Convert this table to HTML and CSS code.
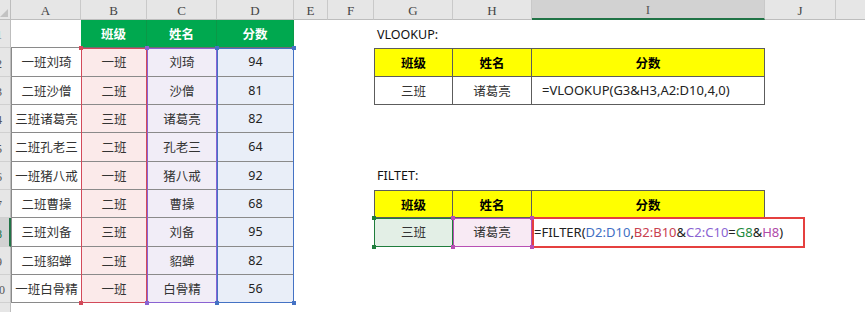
FILE: index.html
```html
<!DOCTYPE html>
<html lang="zh-CN">
<head>
<meta charset="utf-8">
<title>Sheet</title>
<link rel="stylesheet" href="styles.css">
</head>
<body>
<div class="sheet">
  <div class="layer cells">
    <!-- header row -->
    <div class="c corner"><i class="tri"></i></div>
    <div class="c ch">A</div>
    <div class="c ch">B</div>
    <div class="c ch">C</div>
    <div class="c ch">D</div>
    <div class="c ch">E</div>
    <div class="c ch">F</div>
    <div class="c ch">G</div>
    <div class="c ch">H</div>
    <div class="c ch sel">I</div>
    <div class="c ch">J</div>
    <div class="c ch last"></div>

    <!-- row 1 -->
    <div class="c rh"><span>1</span></div>
    <div class="c a a1"></div>
    <div class="c gh">班级</div>
    <div class="c gh">姓名</div>
    <div class="c gh">分数</div>
    <div class="c"></div>
    <div class="c"></div>
    <div class="c label vl">VLOOKUP:</div>
    <div class="c"></div>
    <div class="c"></div>
    <div class="c"></div>
    <div class="c"></div>

    <!-- row 2 -->
    <div class="c rh"><span>2</span></div>
    <div class="c a">一班刘琦</div>
    <div class="c d fb">一班</div>
    <div class="c d fc">刘琦</div>
    <div class="c d fd">94</div>
    <div class="c"></div>
    <div class="c"></div>
    <div class="c t yh tl tt">班级</div>
    <div class="c t yh tt">姓名</div>
    <div class="c t yh tt">分数</div>
    <div class="c"></div>
    <div class="c"></div>

    <!-- row 3 -->
    <div class="c rh"><span>3</span></div>
    <div class="c a">二班沙僧</div>
    <div class="c d fb">二班</div>
    <div class="c d fc">沙僧</div>
    <div class="c d fd">81</div>
    <div class="c"></div>
    <div class="c"></div>
    <div class="c t tl">三班</div>
    <div class="c t">诸葛亮</div>
    <div class="c t formula vf">=VLOOKUP(G3&amp;H3,A2:D10,4,0)</div>
    <div class="c"></div>
    <div class="c"></div>

    <!-- row 4 -->
    <div class="c rh"><span>4</span></div>
    <div class="c a">三班诸葛亮</div>
    <div class="c d fb">三班</div>
    <div class="c d fc">诸葛亮</div>
    <div class="c d fd">82</div>
    <div class="c"></div><div class="c"></div><div class="c"></div><div class="c"></div><div class="c"></div><div class="c"></div><div class="c"></div>

    <!-- row 5 -->
    <div class="c rh"><span>5</span></div>
    <div class="c a">二班孔老三</div>
    <div class="c d fb">二班</div>
    <div class="c d fc">孔老三</div>
    <div class="c d fd">64</div>
    <div class="c"></div><div class="c"></div><div class="c"></div><div class="c"></div><div class="c"></div><div class="c"></div><div class="c"></div>

    <!-- row 6 -->
    <div class="c rh"><span>6</span></div>
    <div class="c a">一班猪八戒</div>
    <div class="c d fb">一班</div>
    <div class="c d fc">猪八戒</div>
    <div class="c d fd">92</div>
    <div class="c"></div>
    <div class="c"></div>
    <div class="c label">FILTET:</div>
    <div class="c"></div><div class="c"></div><div class="c"></div><div class="c"></div>

    <!-- row 7 -->
    <div class="c rh"><span>7</span></div>
    <div class="c a">二班曹操</div>
    <div class="c d fb">二班</div>
    <div class="c d fc">曹操</div>
    <div class="c d fd">68</div>
    <div class="c"></div>
    <div class="c"></div>
    <div class="c t yh tl tt">班级</div>
    <div class="c t yh tt">姓名</div>
    <div class="c t yh tt">分数</div>
    <div class="c"></div>
    <div class="c"></div>

    <!-- row 8 -->
    <div class="c rh rsel"><span>8</span></div>
    <div class="c a">三班刘备</div>
    <div class="c d fb">三班</div>
    <div class="c d fc">刘备</div>
    <div class="c d fd">95</div>
    <div class="c"></div>
    <div class="c"></div>
    <div class="c t tl fg">三班</div>
    <div class="c t fh">诸葛亮</div>
    <div class="c t formula ff">=FILTER(<span class="k-d">D2:D10</span>,<span class="k-b">B2:B10</span>&amp;<span class="k-c">C2:C10</span>=<span class="k-g">G8</span>&amp;<span class="k-h">H8</span>)</div>
    <div class="c"></div>
    <div class="c"></div>

    <!-- row 9 -->
    <div class="c rh"><span>9</span></div>
    <div class="c a">二班貂蝉</div>
    <div class="c d fb">二班</div>
    <div class="c d fc">貂蝉</div>
    <div class="c d fd">82</div>
    <div class="c"></div><div class="c"></div><div class="c"></div><div class="c"></div><div class="c"></div><div class="c"></div><div class="c"></div>

    <!-- row 10 -->
    <div class="c rh"><span>10</span></div>
    <div class="c a">一班白骨精</div>
    <div class="c d fb">一班</div>
    <div class="c d fc">白骨精</div>
    <div class="c d fd">56</div>
    <div class="c"></div><div class="c"></div><div class="c"></div><div class="c"></div><div class="c"></div><div class="c"></div><div class="c"></div>

    <!-- row 11 -->
    <div class="c rh"><span>11</span></div>
    <div class="c"></div><div class="c"></div><div class="c"></div><div class="c"></div><div class="c"></div><div class="c"></div><div class="c"></div><div class="c"></div><div class="c"></div><div class="c"></div><div class="c"></div>
  </div>

  <div class="layer marks">
    <div class="range r-b"><i class="hd tl"></i><i class="hd tr"></i><i class="hd bl"></i><i class="hd br"></i></div>
    <div class="range r-c"><i class="hd tl"></i><i class="hd tr"></i><i class="hd bl"></i><i class="hd br"></i></div>
    <div class="range r-d"><i class="hd tl"></i><i class="hd tr"></i><i class="hd bl"></i><i class="hd br"></i></div>
    <div class="range r-g"><i class="hd tl"></i><i class="hd tr"></i><i class="hd bl"></i><i class="hd br"></i></div>
    <div class="range r-h"><i class="hd tl"></i><i class="hd tr"></i><i class="hd bl"></i><i class="hd br"></i></div>
    <div class="editbox"></div>
  </div>
</div>
</body>
</html>
```

FILE: styles.css
```css
html, body {
  margin: 0;
  padding: 0;
  background: #ffffff;
}

body {
  width: 865px;
  height: 312px;
  overflow: hidden;
  font-family: "Noto Sans", "Noto Sans CJK SC", sans-serif;
}

.sheet {
  display: grid;
  width: 865px;
  height: 312px;
  overflow: hidden;
}

.layer {
  grid-area: 1 / 1;
  display: grid;
  grid-template-columns: 11px 70px 66px 70px 77px 34px 46px 79px 79px 233px 71px 1fr;
  grid-template-rows: 20px repeat(11, 28.33px);
}

.marks {
  z-index: 2;
  pointer-events: none;
}

.c {
  display: flex;
  align-items: center;
  justify-content: center;
  box-sizing: border-box;
  min-width: 0;
  white-space: nowrap;
  font-size: 12.5px;
  color: #333333;
}

/* headers */
.corner {
  background: #e6e6e6;
  border-right: 1px solid #bdbdbd;
  border-bottom: 1px solid #bdbdbd;
  position: relative;
}

.tri {
  position: absolute;
  right: 2px;
  bottom: 2px;
  width: 8px;
  height: 8px;
  background: #c2c2c2;
  clip-path: polygon(100% 0, 100% 100%, 0 100%);
}

.ch {
  background: #e6e6e6;
  border-right: 1px solid #c9c9c9;
  border-bottom: 1px solid #bdbdbd;
  font-family: "Liberation Serif", "DejaVu Serif", serif;
  font-size: 13px;
  color: #444444;
  padding-top: 2px;
}

.ch.last {
  border-right: none;
}

.ch.sel {
  background: #d2d2d2;
  border-bottom: 2px solid #217346;
  color: #555555;
}

.rh {
  background: #e6e6e6;
  border-right: 1px solid #bdbdbd;
  border-bottom: 1px solid #d0d0d0;
  justify-content: flex-start;
  align-items: flex-end;
  overflow: hidden;
  font-family: "Liberation Serif", "DejaVu Serif", serif;
  font-size: 12px;
  color: #555555;
  padding-bottom: 4px;
}

.rh span {
  display: block;
  flex: none;
  width: 24px;
  margin-left: -13px;
  text-align: center;
}

.rh.rsel {
  background: #d2d2d2;
  border-right: 2px solid #217346;
  color: #217346;
}

/* left table */
.a {
  background: #ffffff;
  border-left: 1px solid #8a8a8a;
  border-bottom: 1px solid #8a8a8a;
}

.a1 {
  border-left: none;
}

.gh {
  background: #00a84f;
  color: #ffffff;
  font-weight: bold;
  border-right: 1px solid #0b9847;
  border-bottom: 1px solid #6e6e6e;
}

.d {
  border-bottom: 1px solid #8a8a8a;
}

.fb { background: #fbeaea; }
.fc { background: #f1edf7; }
.fd { background: #e9eef8; color: #222222; }

/* right tables */
.label {
  justify-content: flex-start;
  padding-left: 3px;
  color: #111111;
  font-size: 12.5px;
}

.label.vl {
  align-items: flex-end;
  padding-bottom: 5px;
}

.t {
  border-right: 1px solid #5c5c5c;
  border-bottom: 1px solid #5c5c5c;
}

.t.tl {
  border-left: 1px solid #5c5c5c;
}

.t.tt {
  border-top: 1px solid #5c5c5c;
}

.yh {
  background: #ffff00;
  color: #000000;
  font-weight: bold;
}

.formula {
  justify-content: flex-start;
  overflow: visible;
  color: #222222;
  font-size: 13px;
}

.vf {
  padding-left: 10px;
}

.ff {
  padding-left: 2px;
  border-right: none;
}

.fg { background: #e3efe6; }
.fh { background: #f8eaf4; }

.k-d { color: #3f6fc4; }
.k-b { color: #c8414f; }
.k-c { color: #8a63d2; }
.k-g { color: #1e8a3e; }
.k-h { color: #b04aa8; }

/* range marks */
.range {
  position: relative;
  box-sizing: border-box;
  border: 1px solid var(--rc);
}

.r-b { grid-column: 3; grid-row: 3 / 12; --rc: #d24a5a; }
.r-c { grid-column: 4; grid-row: 3 / 12; --rc: #8a63d2; }
.r-d { grid-column: 5; grid-row: 3 / 12; --rc: #4472c4; }
.r-g { grid-column: 8; grid-row: 9; --rc: #1f7d3c; }
.r-h { grid-column: 9; grid-row: 9; --rc: #b84fb4; }

.hd {
  position: absolute;
  width: 4px;
  height: 4px;
  background: var(--rc);
}

.hd.tl { left: -3px; top: -3px; }
.hd.tr { right: -3px; top: -3px; }
.hd.bl { left: -3px; bottom: -3px; }
.hd.br { right: -3px; bottom: -3px; }

.editbox {
  grid-column: 10 / 13;
  grid-row: 9;
  justify-self: start;
  width: 273px;
  margin: -1px 0 -1px 0;
  box-sizing: border-box;
  border: 2px solid #e5403f;
}
```
